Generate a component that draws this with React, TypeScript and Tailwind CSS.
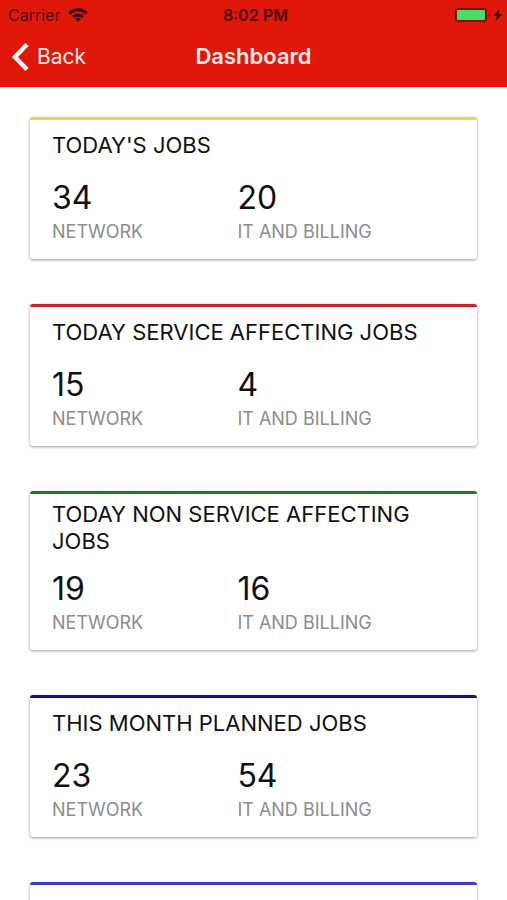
import clsx from "clsx";

type Summary = {
  title?: string;
  accent: string;
  network?: number;
  billing?: number;
};

const summaries: Summary[] = [
  { title: "TODAY'S JOBS", accent: "border-t-[#f0d53c]", network: 34, billing: 20 },
  { title: "TODAY SERVICE AFFECTING JOBS", accent: "border-t-[#c4262b]", network: 15, billing: 4 },
  { title: "TODAY NON SERVICE AFFECTING JOBS", accent: "border-t-[#1f7a24]", network: 19, billing: 16 },
  { title: "THIS MONTH PLANNED JOBS", accent: "border-t-[#17127a]", network: 23, billing: 54 },
  { accent: "border-t-[#413bc4]" },
];

function WifiIcon() {
  return (
    <svg viewBox="0 0 20 14" className="h-[14px] w-5 text-[#330301]" fill="none" stroke="currentColor" strokeWidth="3">
      <path d="M1.500 5.300a12.200 12.200 0 0 1 17 0" />
      <path d="M5 9a7.200 7.200 0 0 1 10 0" />
      <path d="M10 13.800 7.200 11a4 4 0 0 1 5.600 0z" fill="currentColor" stroke="none" />
    </svg>
  );
}

function BatteryIcon() {
  return (
    <svg viewBox="0 0 48 14" className="h-[14px] w-12">
      <rect x="1" y="1" width="30" height="12" rx="2" fill="#4ddb62" stroke="#7a1206" strokeWidth="2" />
      <path d="M33.500 5v4q1.500-.5 1.500-2t-1.500-2z" fill="#7a1206" />
      <path d="M44.500 1 38.500 7.800h3.500L40.500 13 47.500 6.200h-3.800z" fill="#3d0503" />
    </svg>
  );
}

function StatusBar() {
  return (
    <div className="grid h-[30px] grid-cols-3 items-center pr-1 pl-2 text-base text-[#4f0502]">
      <div className="flex items-center gap-2">
        <span>Carrier</span>
        <WifiIcon />
      </div>
      <span className="text-center font-semibold">8:02 PM</span>
      <div className="flex justify-end">
        <BatteryIcon />
      </div>
    </div>
  );
}

function NavBar() {
  return (
    <div className="grid h-[57px] grid-cols-3 items-center px-3 pb-1 text-[#ffe9e5]">
      <button type="button" className="flex items-center gap-2 text-[21px]">
        <svg viewBox="0 0 17 28" className="h-7 w-[17px]" fill="none" stroke="#fff5f3" strokeWidth="4.500">
          <path d="M15 1.500 3 14l12 12.500" />
        </svg>
        Back
      </button>
      <h1 className="text-center text-[22px] font-semibold">Dashboard</h1>
    </div>
  );
}

function Stat({ value, label }: { value?: number; label: string }) {
  return (
    <div>
      <dd className="text-[32px] leading-[38px] text-[#111]">{value}</dd>
      <dt className="mt-[3px] text-[18px] leading-6 text-[#8c8c8c]">{label}</dt>
    </div>
  );
}

function SummaryCard({ title, accent, network, billing }: Summary) {
  return (
    <section
      className={clsx(
        "min-h-[142px] shrink-0 rounded-[3px] border-t-3 bg-white px-[22px] pt-[6px] pb-[15px] shadow-[0_1px_3px_rgba(0,0,0,0.4)]",
        accent
      )}
    >
      {title && (
        <>
          <div className="flex min-h-[38px] items-center pt-px">
            <h2 className="text-[22px] leading-[27px] text-[#111]">{title}</h2>
          </div>
          <dl className="mt-[15px] grid grid-cols-[46%_54%]">
            <Stat value={network} label="NETWORK" />
            <Stat value={billing} label="IT AND BILLING" />
          </dl>
        </>
      )}
    </section>
  );
}

export default function App() {
  return (
    <div className="flex h-screen flex-col bg-white font-['Inter','Liberation_Sans',sans-serif]">
      <header className="shrink-0 bg-[#df180a]">
        <StatusBar />
        <NavBar />
      </header>
      <main className="flex min-h-0 flex-1 flex-col gap-[45px] overflow-hidden px-[30px] pt-[30px]">
        {summaries.map((summary) => (
          <SummaryCard key={summary.accent} {...summary} />
        ))}
      </main>
    </div>
  );
}
